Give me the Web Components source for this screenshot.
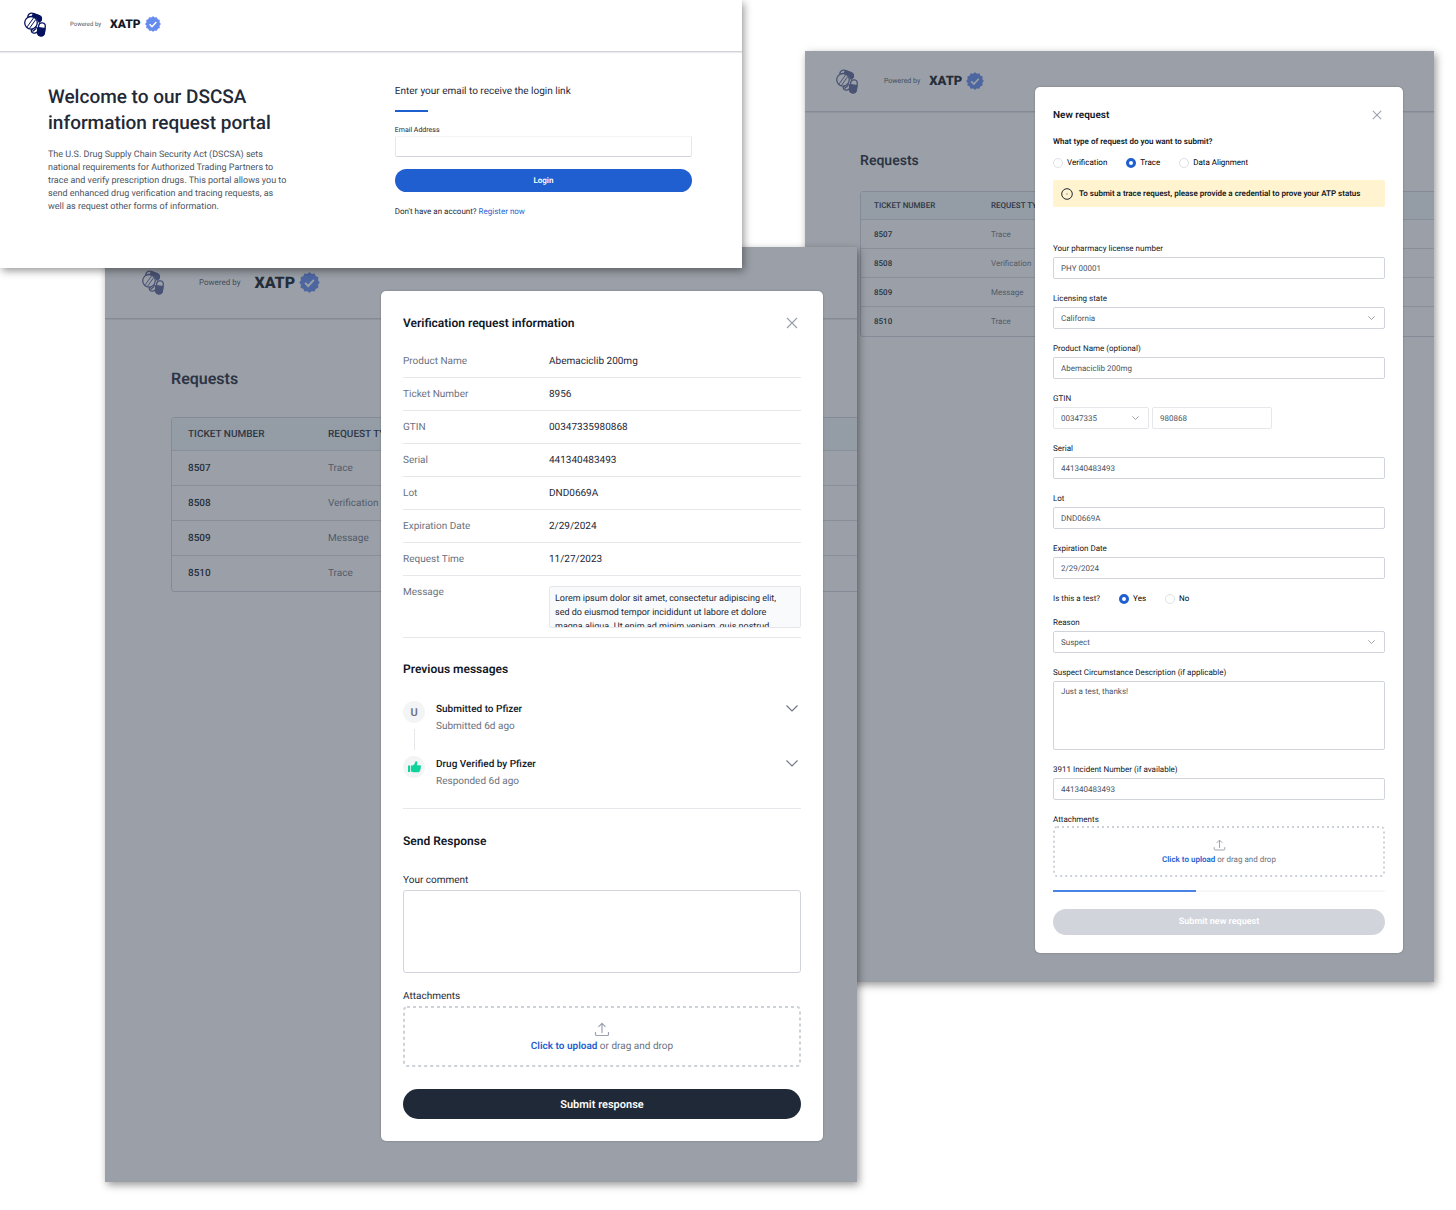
<!DOCTYPE html>
<html lang="en">
<head>
<meta charset="utf-8">
<meta name="viewport" content="width=device-width, initial-scale=1">
<title>DSCSA information request portal</title>
<style>
  body {
    margin: 0;
    background: #fff;
    color: #1f2937;
    font-family: Roboto, "Liberation Sans", sans-serif;
    text-rendering: geometricPrecision;
  }
</style>
</head>
<body>
<portal-board></portal-board>

<script>
const resetStyles = `
  *, *::before, *::after { box-sizing: border-box; }
  h1, h2, h3, p { margin: 0; padding: 0; }
  button, input, select, textarea {
    margin: 0;
    font: inherit;
    color: inherit;
    text-rendering: inherit;
  }
  button { border: 0; background: none; padding: 0; cursor: pointer; }
  svg { display: block; }
`;

const icons = {
  close: `
    <svg width="100%" height="100%" viewBox="0 0 12 12" fill="none" stroke="#9ca3af" stroke-width="1.3">
      <path d="M1 1l10 10M11 1L1 11"/>
    </svg>`,
  chevron: `
    <svg width="100%" viewBox="0 0 12 7" fill="none" stroke="currentColor" stroke-width="1.1">
      <path d="M.5.5L6 6 11.500.5"/>
    </svg>`,
  upload: `
    <svg width="100%" viewBox="0 0 16 15" fill="none" stroke="#9ca3af" stroke-width="1.2">
      <path d="M8 11V1.500M4.500 4.800L8 1.300l3.500 3.500M1.500 10v2.500a1 1 0 0 0 1 1h11a1 1 0 0 0 1-1V10"/>
    </svg>`,
  info: `
    <svg width="12" height="12" viewBox="0 0 12 12" fill="none" stroke="#1f2937">
      <circle cx="6" cy="6" r="5.300"/>
      <path d="M6 5v2" stroke="#9ca3af"/>
    </svg>`,
  thumb: `
    <svg width="13" height="12" viewBox="0 0 13 12" fill="#0fd39b">
      <path d="M0 4.500h2V11H0zM2.800 4.600h1.800C6 4 6.900 2.600 7.200.8 7.400-.2 9.400 0 9.400 1.800c0 .9-.2 1.700-.6 2.400h3.100c1.300 0 1.400 1.500.7 2 .5.700.3 1.500-.3 1.900.3.700 0 1.400-.6 1.700.1.900-.5 1.400-1.300 1.400H5.200c-.9 0-1.500-.6-2.400-.6z"/>
    </svg>`,
};

class PortalElement extends HTMLElement {
  constructor() {
    super();
    this.attachShadow({ mode: 'open' });
  }

  connectedCallback() {
    this.shadowRoot.innerHTML = `
      <style>${resetStyles}${this.styles}</style>
      ${this.createHTML()}
    `;
  }

  attr(name, fallback = '') {
    return this.getAttribute(name) || fallback;
  }
}

class PortalBoard extends PortalElement {
  get styles() {
    return `
      :host {
        display: grid;
        grid-template-columns: 105fr 637fr 63fr 52fr 577fr 22fr;
        align-items: start;
        padding-bottom: 28px;
        overflow: hidden;
      }
      login-window, requests-window {
        grid-row: 1;
        min-width: 0;
        isolation: isolate;
        box-shadow: 2px 3px 8px rgba(0, 0, 0, 0.4);
      }
      .trace {
        grid-column: 4 / 6;
        margin-top: 51px;
      }
      .verification {
        grid-column: 2 / 5;
        margin-top: 247px;
        --columns: 276fr 442fr 34fr;
        --modal-margin: 44px 0 41px;
        --modal-padding: 22px;
        --header-height: 72px;
        --header-pad: 36px;
        --powered-gap: 34px;
        --powered-size: 8px;
        --word-gap: 14px;
        --word-size: 16px;
        --badge-size: 21px;
        --page-pad: 66px;
        --title-size: 16px;
        --title-pad: 48px 0 26px;
        --cell-size: 10px;
        --head-height: 33px;
        --cell-height: 35px;
        --cell-pad: 16px;
        --cell-width: 140px;
      }
      .login {
        grid-column: 1 / 3;
      }
    `;
  }

  createHTML() {
    return `
      <requests-window class="trace"><new-request></new-request></requests-window>
      <requests-window class="verification"><verification-info></verification-info></requests-window>
      <login-window class="login"></login-window>
    `;
  }
}

class BrandHeader extends PortalElement {
  get styles() {
    return `
      :host {
        box-sizing: border-box;
        display: flex;
        align-items: center;
        height: var(--header-height, 61px);
        padding-left: var(--header-pad, 30px);
        border-bottom: 1px solid #d1d5db;
        box-shadow: 0 1px 1px rgba(0, 0, 0, 0.08);
      }
      .logo { opacity: var(--logo-opacity, 0.65); }
      .powered {
        margin-left: var(--powered-gap, 25px);
        font-size: var(--powered-size, 7px);
        color: #4b5563;
      }
      .word {
        margin: 0 4px 0 var(--word-gap, 9px);
        font-size: var(--word-size, 13px);
        font-weight: 900;
        color: #111827;
      }
      .badge {
        width: var(--badge-size, 18px);
        height: var(--badge-size, 18px);
      }
    `;
  }

  badgePoints() {
    return Array.from({ length: 24 }, (_, i) => {
      const radius = i % 2 ? 9 : 10.6;
      const angle = (i * Math.PI) / 12;
      return `${(12 + radius * Math.sin(angle)).toFixed(2)},${(12 - radius * Math.cos(angle)).toFixed(2)}`;
    }).join(' ');
  }

  createHTML() {
    return `
      <svg class="logo" width="24" height="25" viewBox="0 0 24 25" fill="#fff" stroke="#04125f" stroke-width="1.300">
        <path d="M4.800 5.500C4.600 2.300 7 .5 9.800 1.300l6.800 2.600c1.700.9 2.200 2.700 1.400 4.600l-2 2"/>
        <path d="M10.500 1.600l6.100 2.300c1.700.9 2.200 2.700 1.400 4.600l-2.400 1.200C14.500 7 12.500 5 9 4.600z" fill="#04125f"/>
        <path d="M8.200 18.500a3.300 3.300 0 1 0 3-3.900z"/>
        <path d="M9.500 19.500l3.600-3" fill="none"/>
        <circle cx="8" cy="10.800" r="6.300"/>
        <path d="M10.800 5.600L4.200 14.800M12.700 7.600L6.600 16.200" fill="none" stroke-width="1"/>
        <g transform="rotate(8 18.500 17.500)">
          <rect x="15.200" y="10.800" width="6.600" height="13" rx="3.300"/>
          <path d="M15.200 16h6.600v4.500a3.300 3.300 0 0 1-6.600 0z" fill="#04125f"/>
        </g>
      </svg>
      <span class="powered">Powered by</span>
      <span class="word">XATP</span>
      <svg class="badge" viewBox="0 0 24 24">
        <polygon points="${this.badgePoints()}" fill="#658bee" stroke="#658bee" stroke-width="2" stroke-linejoin="round"/>
        <path d="M7 12.500l3.500 3.500 6.500-7" fill="none" stroke="#fff" stroke-width="2.200"/>
      </svg>
    `;
  }
}

class LoginWindow extends PortalElement {
  get styles() {
    return `
      :host {
        display: block;
        background: #fff;
        --logo-opacity: 1;
        --header-height: 52px;
        --header-pad: 23px;
        --powered-gap: 23px;
        --powered-size: 6px;
        --word-gap: 9px;
        --word-size: 12px;
        --badge-size: 16px;
      }
      brand-header { padding-bottom: 3px; }
      .body {
        display: grid;
        grid-template-columns: minmax(0, 7fr) minmax(0, 6fr);
        padding: 32px 50px 50px 48px;
      }
      h1 {
        font-size: 19px;
        line-height: 26px;
        font-weight: 500;
      }
      .intro {
        max-width: 255px;
        margin-top: 13px;
        font-size: 9px;
        line-height: 13px;
        color: #4b5563;
      }
      h2 {
        font-size: 10px;
        line-height: 16px;
        font-weight: 400;
      }
      .rule {
        width: 33px;
        height: 2px;
        margin: 10px 0 12px;
        background: #1d5fd1;
      }
      label {
        display: block;
        font-size: 7px;
        line-height: 12px;
      }
      input {
        display: block;
        width: 100%;
        height: 21px;
        margin-bottom: 12px;
        padding: 0 8px;
        font-size: 8px;
        border: 1px solid #e5e7eb;
        border-top-color: #f3f4f6;
        border-bottom-color: #d1d5db;
        border-radius: 2px;
      }
      button {
        display: block;
        width: 100%;
        height: 23px;
        border-radius: 12px;
        background: #1f5fd0;
        color: #fff;
        font-size: 8px;
        font-weight: 600;
      }
      .register {
        margin-top: 14px;
        font-size: 8px;
        line-height: 12px;
      }
      a {
        color: #1f5fd0;
        text-decoration: none;
      }
    `;
  }

  createHTML() {
    return `
      <brand-header></brand-header>
      <div class="body">
        <section>
          <h1>Welcome to our DSCSA<br>information request portal</h1>
          <p class="intro">
            The U.S. Drug Supply Chain Security Act (DSCSA) sets<br>
            national requirements for Authorized Trading Partners to<br>
            trace and verify prescription drugs. This portal allows you to<br>
            send enhanced drug verification and tracing requests, as<br>
            well as request other forms of information.
          </p>
        </section>
        <form>
          <h2>Enter your email to receive the login link</h2>
          <div class="rule"></div>
          <label for="email">Email Address</label>
          <input id="email" type="email">
          <button type="button">Login</button>
          <p class="register">Don't have an account? <a href="#register">Register now</a></p>
        </form>
      </div>
    `;
  }
}

// Dimmed list of requests with whatever is slotted shown as a modal above it
class RequestsWindow extends PortalElement {
  get styles() {
    return `
      :host {
        display: grid;
        grid-template-columns: var(--columns, 230fr 368fr 31fr);
        overflow: hidden;
        background: #fff;
      }
      .page, .scrim {
        grid-area: 1 / 1 / 2 / -1;
        min-width: 0;
      }
      .page { overflow: hidden; }
      .scrim {
        background: rgba(55, 65, 81, 0.5);
        z-index: 1;
      }
      .modal {
        grid-area: 1 / 2;
        z-index: 2;
        min-width: 0;
        margin: var(--modal-margin, 36px 0 29px);
        padding: var(--modal-padding, 18px);
        border-radius: 5px;
        background: #fff;
        box-shadow: 0 0 2px rgba(0, 0, 0, 0.3);
      }
      .content { padding-left: var(--page-pad, 55px); }
      h2 {
        padding: var(--title-pad, 37px 0 18px);
        font-size: var(--title-size, 14px);
        line-height: 24px;
        font-weight: 600;
      }
      table {
        width: 110%;
        table-layout: fixed;
        border: 1px solid #d1d5db;
        border-radius: 3px;
        border-spacing: 0;
        font-size: var(--cell-size, 8px);
        text-align: left;
      }
      th, td {
        height: var(--cell-height, 29px);
        padding: 0 0 0 var(--cell-pad, 13px);
        border-bottom: 1px solid #d9dce1;
      }
      th {
        height: var(--head-height, 28px);
        background: #f1f8f8;
        font-weight: 500;
        white-space: nowrap;
      }
      th:first-child { width: var(--cell-width, 117px); }
      tbody tr:last-child td { border-bottom: 0; }
      td { color: #6b7280; }
      td:first-child {
        color: #111827;
        font-weight: 500;
      }
    `;
  }

  createHTML() {
    const rows = [
      ['8507', 'Trace'],
      ['8508', 'Verification'],
      ['8509', 'Message'],
      ['8510', 'Trace'],
    ];
    return `
      <div class="page">
        <brand-header></brand-header>
        <div class="content">
          <h2>Requests</h2>
          <table>
            <thead><tr><th>TICKET NUMBER</th><th>REQUEST TYPE</th></tr></thead>
            <tbody>
              ${rows.map(([ticket, type]) => `<tr><td>${ticket}</td><td>${type}</td></tr>`).join('')}
            </tbody>
          </table>
        </div>
      </div>
      <div class="scrim"></div>
      <div class="modal"><slot></slot></div>
    `;
  }
}

class ModalTitle extends PortalElement {
  get styles() {
    return `
      :host {
        display: flex;
        align-items: center;
        justify-content: space-between;
        height: 20px;
        padding-right: 3px;
      }
      h2 {
        font-size: var(--heading-size);
        font-weight: 600;
        color: #111827;
      }
      button {
        width: var(--close-size);
        height: var(--close-size);
      }
    `;
  }

  createHTML() {
    return `
      <h2><slot></slot></h2>
      <button type="button" aria-label="Close">${icons.close}</button>
    `;
  }
}

class FileDrop extends PortalElement {
  get styles() {
    return `
      :host { display: block; }
      label {
        display: grid;
        height: var(--drop-height);
        color: #6b7280;
      }
      .outline, .content { grid-area: 1 / 1; }
      .outline {
        width: 100%;
        height: 100%;
      }
      rect {
        x: 1px;
        y: 1px;
        width: calc(100% - 2px);
        height: calc(100% - 2px);
        fill: none;
        stroke: #cdd1d8;
        stroke-width: 2px;
        stroke-dasharray: var(--drop-dash);
      }
      .content {
        display: flex;
        flex-direction: column;
        align-items: center;
        justify-content: center;
        gap: var(--drop-gap, 4px);
      }
      input { display: none; }
      .icon { width: var(--upload-size); }
      b {
        font-weight: 600;
        color: #1f5fd0;
      }
    `;
  }

  createHTML() {
    return `
      <label>
        <svg class="outline"><rect rx="3"/></svg>
        <span class="content">
          <span class="icon">${icons.upload}</span>
          <span><b>Click to upload</b> or drag and drop</span>
        </span>
        <input type="file">
      </label>
    `;
  }
}

class DetailRow extends PortalElement {
  get styles() {
    return `
      :host {
        display: grid;
        grid-template-columns: 146px minmax(0, 1fr);
        padding-top: 2px;
        border-bottom: 1px solid #e5e7eb;
        line-height: 30px;
      }
      .name { color: #6b7280; }
    `;
  }

  createHTML() {
    return `
      <span class="name">${this.attr('name')}</span>
      <span><slot></slot></span>
    `;
  }
}

class MessageItem extends PortalElement {
  get styles() {
    return `
      :host {
        display: grid;
        grid-template-columns: 22px minmax(0, 1fr) 12px;
        column-gap: 11px;
        margin-right: 3px;
      }
      .marker {
        display: flex;
        flex-direction: column;
        align-items: center;
        gap: 6px;
      }
      .avatar {
        display: grid;
        place-items: center;
        width: 22px;
        height: 22px;
        border-radius: 50%;
        background: #f3f4f6;
        color: #6b7280;
        font-size: 11px;
        font-weight: 600;
      }
      .line {
        width: 1px;
        height: 21px;
        margin-bottom: 6px;
        background: #e5e7eb;
      }
      :host(:last-of-type) .line { display: none; }
      .text { padding-top: 2px; }
      h3 {
        font-size: 10px;
        line-height: 14px;
        font-weight: 500;
        color: #111827;
      }
      p {
        margin-top: 3px;
        line-height: 14px;
        color: #6b7280;
      }
      button {
        width: 12px;
        height: 15px;
        color: #6b7280;
      }
    `;
  }

  createHTML() {
    return `
      <div class="marker">
        <span class="avatar"><slot></slot>${this.hasAttribute('verified') ? icons.thumb : ''}</span>
        <span class="line"></span>
      </div>
      <div class="text">
        <h3>${this.attr('heading')}</h3>
        <p>${this.attr('time')}</p>
      </div>
      <button type="button" aria-label="Expand">${icons.chevron}</button>
    `;
  }
}

class VerificationInfo extends PortalElement {
  get styles() {
    return `
      :host {
        display: block;
        font-size: 10px;
        --heading-size: 12px;
        --close-size: 12px;
        --drop-height: 61px;
        --drop-dash: 3px 3px;
        --upload-size: 16px;
      }
      .details { margin-top: 12px; }
      .excerpt {
        height: 42px;
        margin: 8px 0 9px;
        padding: 5px 0 0 5px;
        border: 1px solid #e5e7eb;
        border-radius: 2px;
        background: #f9fafb;
        font-size: 9px;
        line-height: 14px;
        overflow: hidden;
      }
      h3 {
        font-size: 12px;
        line-height: 20px;
        font-weight: 600;
        color: #111827;
      }
      .messages {
        margin: 21px 0 22px;
        padding-bottom: 19px;
        border-bottom: 1px solid #e5e7eb;
      }
      .messages h3 { margin-bottom: 22px; }
      label, .label {
        display: block;
        line-height: 14px;
      }
      label { margin-top: 23px; }
      textarea {
        display: block;
        width: 100%;
        height: 83px;
        margin: 2px 0 17px;
        border: 1px solid #d1d5db;
        border-radius: 3px;
        resize: none;
      }
      file-drop { margin: 2px 0 22px; }
      .submit {
        display: block;
        width: 100%;
        height: 30px;
        border-radius: 15px;
        background: #1f2937;
        color: #fff;
        font-size: 11px;
        font-weight: 600;
      }
    `;
  }

  createHTML() {
    return `
      <modal-title>Verification request information</modal-title>
      <div class="details">
        <detail-row name="Product Name">Abemaciclib 200mg</detail-row>
        <detail-row name="Ticket Number">8956</detail-row>
        <detail-row name="GTIN">00347335980868</detail-row>
        <detail-row name="Serial">441340483493</detail-row>
        <detail-row name="Lot">DND0669A</detail-row>
        <detail-row name="Expiration Date">2/29/2024</detail-row>
        <detail-row name="Request Time">11/27/2023</detail-row>
        <detail-row name="Message">
          <div class="excerpt">
            Lorem ipsum dolor sit amet, consectetur adipiscing elit,<br>
            sed do eiusmod tempor incididunt ut labore et dolore<br>
            magna aliqua. Ut enim ad minim veniam, quis nostrud
          </div>
        </detail-row>
      </div>
      <section class="messages">
        <h3>Previous messages</h3>
        <message-item heading="Submitted to Pfizer" time="Submitted 6d ago">U</message-item>
        <message-item heading="Drug Verified by Pfizer" time="Responded 6d ago" verified></message-item>
      </section>
      <h3>Send Response</h3>
      <label for="comment">Your comment</label>
      <textarea id="comment"></textarea>
      <span class="label">Attachments</span>
      <file-drop></file-drop>
      <button type="button" class="submit">Submit response</button>
    `;
  }
}

class FormField extends PortalElement {
  get styles() {
    return `
      :host {
        display: block;
        margin-bottom: 14px;
      }
      label {
        display: block;
        line-height: 12px;
        margin-bottom: 2px;
      }
      .control { display: grid; }
      input, select, textarea {
        grid-area: 1 / 1;
        width: 100%;
        min-width: 0;
        height: 22px;
        padding: 0 7px;
        border: 1px solid #d1d5db;
        border-radius: 2px;
        background: #fff;
        color: #4b5563;
        appearance: none;
      }
      textarea {
        display: block;
        height: 69px;
        padding: 5px 7px;
        resize: none;
      }
      .arrow {
        grid-area: 1 / 1;
        place-self: center end;
        width: 7px;
        margin-right: 10px;
        color: #6b7280;
        pointer-events: none;
      }
      .control.pair {
        grid-template-columns: 96fr 120fr 110fr;
        column-gap: 3px;
      }
      .pair input { grid-area: 1 / 2; }
      .pair input, .pair select { border-color: #e5e7eb; }
    `;
  }

  createControl() {
    const value = this.attr('value');
    const arrow = `<span class="arrow">${icons.chevron}</span>`;
    const select = `<select id="control"><option>${value}</option></select>${arrow}`;
    switch (this.attr('type')) {
      case 'select':
        return `<div class="control">${select}</div>`;
      case 'pair':
        return `
          <div class="control pair">
            ${select}
            <input type="text" aria-label="${this.attr('label')} item" value="${this.attr('suffix')}">
          </div>`;
      case 'textarea':
        return `<textarea id="control">${value}</textarea>`;
      default:
        return `<div class="control"><input id="control" type="text" value="${value}"></div>`;
    }
  }

  createHTML() {
    return `
      <label for="control">${this.attr('label')}</label>
      ${this.createControl()}
    `;
  }
}

class RadioGroup extends PortalElement {
  get styles() {
    return `
      :host { display: block; }
      fieldset {
        display: flex;
        flex-wrap: wrap;
        align-items: center;
        column-gap: 19px;
        min-width: 0;
        margin: 0;
        padding: 0;
        border: 0;
        line-height: 12px;
      }
      legend {
        float: left;
        padding: 0;
      }
      :host([stacked]) legend {
        float: none;
        margin-bottom: 9px;
        font-weight: 600;
      }
      label {
        display: flex;
        align-items: center;
        gap: 4px;
        color: #000;
      }
      input {
        width: 10px;
        height: 10px;
        border: 1px solid #dfe1e5;
        border-radius: 50%;
        background: #fff;
        appearance: none;
      }
      input:checked { border: 3px solid #1f5fd0; }
    `;
  }

  createHTML() {
    const options = this.attr('options').split(',');
    return `
      <fieldset>
        <legend>${this.attr('legend')}</legend>
        ${options.map((option) => `
          <label>
            <input type="radio" name="choice" ${option === this.attr('value') ? 'checked' : ''}>
            ${option}
          </label>`).join('')}
      </fieldset>
    `;
  }
}

class NewRequest extends PortalElement {
  get styles() {
    return `
      :host {
        display: block;
        color: #111827;
        font-size: 8px;
        --heading-size: 10px;
        --close-size: 10px;
        --drop-height: 51px;
        --drop-dash: 2px 3px;
        --drop-gap: 3px;
        --upload-size: 13px;
      }
      modal-title { margin-bottom: 11px; }
      .notice {
        display: flex;
        align-items: center;
        gap: 6px;
        min-height: 27px;
        margin: 11px 0 36px;
        padding: 0 8px;
        border-radius: 2px;
        background: #fff3d0;
        font-weight: 600;
      }
      .test { margin-bottom: 12px; }
      file-drop { margin-bottom: 13px; }
      .label {
        display: block;
        line-height: 12px;
      }
      progress {
        display: block;
        width: 100%;
        height: 2px;
        margin-bottom: 17px;
        border: 0;
        appearance: none;
      }
      progress::-webkit-progress-bar { background: #f6f7f8; }
      progress::-webkit-progress-value { background: #4a83e6; }
      .submit {
        display: block;
        width: 100%;
        height: 26px;
        border-radius: 13px;
        background: #d1d5db;
        color: #fff;
        font-size: 9px;
        font-weight: 600;
      }
    `;
  }

  createHTML() {
    return `
      <modal-title>New request</modal-title>
      <radio-group stacked legend="What type of request do you want to submit?" options="Verification,Trace,Data Alignment" value="Trace"></radio-group>
      <div class="notice">${icons.info}<span>To submit a trace request, please provide a credential to prove your ATP status</span></div>
      <form-field label="Your pharmacy license number" value="PHY 00001"></form-field>
      <form-field label="Licensing state" type="select" value="California"></form-field>
      <form-field label="Product Name (optional)" value="Abemaciclib 200mg"></form-field>
      <form-field label="GTIN" type="pair" value="00347335" suffix="980868"></form-field>
      <form-field label="Serial" value="441340483493"></form-field>
      <form-field label="Lot" value="DND0669A"></form-field>
      <form-field label="Expiration Date" value="2/29/2024"></form-field>
      <radio-group class="test" legend="Is this a test?" options="Yes,No" value="Yes"></radio-group>
      <form-field label="Reason" type="select" value="Suspect"></form-field>
      <form-field label="Suspect Circumstance Description (if applicable)" type="textarea" value="Just a test, thanks!"></form-field>
      <form-field label="3911 Incident Number (if available)" value="441340483493"></form-field>
      <span class="label">Attachments</span>
      <file-drop></file-drop>
      <progress value="43" max="100" aria-label="Upload progress"></progress>
      <button type="button" class="submit" disabled>Submit new request</button>
    `;
  }
}

customElements.define('brand-header', BrandHeader);
customElements.define('modal-title', ModalTitle);
customElements.define('file-drop', FileDrop);
customElements.define('detail-row', DetailRow);
customElements.define('message-item', MessageItem);
customElements.define('form-field', FormField);
customElements.define('radio-group', RadioGroup);
customElements.define('verification-info', VerificationInfo);
customElements.define('new-request', NewRequest);
customElements.define('requests-window', RequestsWindow);
customElements.define('login-window', LoginWindow);
customElements.define('portal-board', PortalBoard);
</script>
</body>
</html>
